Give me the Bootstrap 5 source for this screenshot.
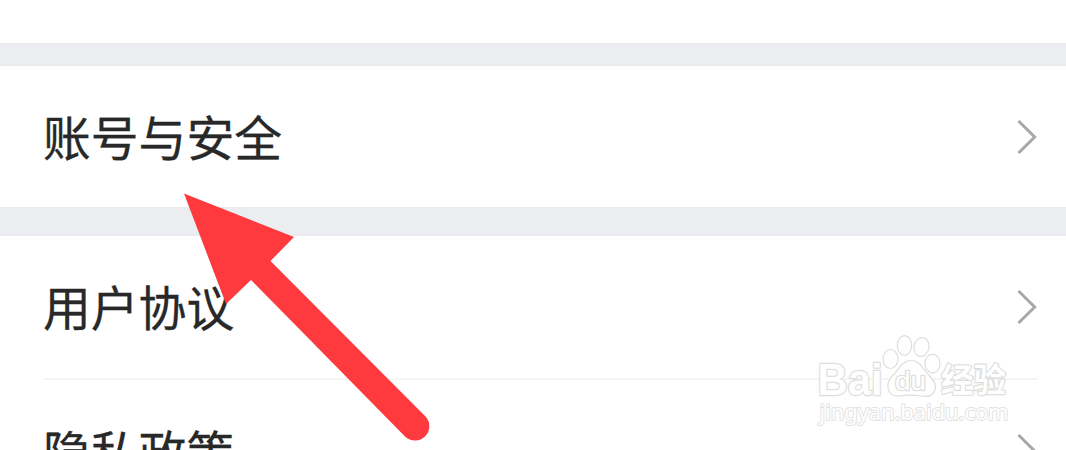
<!DOCTYPE html>
<html lang="zh-CN">
<head>
    <meta charset="UTF-8">
    <meta name="viewport" content="width=device-width, initial-scale=1">
    <title>设置</title>
    <link rel="stylesheet" href="https://cdn.jsdelivr.net/npm/bootstrap@5.3.3/dist/css/bootstrap.min.css">
    <style>
        body {
            font-family: "Noto Sans CJK SC", sans-serif;
            color: #282828;
            height: 450px;
            overflow: hidden;
        }
        .top-space { height: 43px; }
        .band {
            background: #ecedf0;
            border-top: 1px solid #e9eaeb;
            border-bottom: 1px solid #e9eaeb;
        }
        .band-first { height: 23px; }
        .band-second { height: 29px; }
        .setting-row {
            height: 141px;
            padding: 0 29px 0 43px;
            font-size: 47.8px;
            line-height: 70px;
            color: inherit;
            -webkit-text-stroke: .3px #282828;
        }
        .setting-row span { padding-bottom: 2px; }
        .setting-row svg { width: 20px; height: 36px; }
        .row-agreement { height: 142px; }
        .last-row { height: 70px; padding-top: 36px; overflow: hidden; }
        .divider { height: 2px; margin: 0 28px 0 43px; background: #f5f5f5; }
        .pointer, .watermark { left: 0; top: 0; pointer-events: none; }
    </style>
</head>
<body class="bg-white position-relative">
    <div class="top-space"></div>
    <div class="band band-first"></div>
    <a href="#" class="setting-row d-flex align-items-center justify-content-between text-decoration-none">
        <span>账号与安全</span>
        <svg viewBox="0 0 20 36" fill="none" stroke="#a8a8a8" stroke-width="3"><path d="M1.500 2 17.700 18 1.500 34"/></svg>
    </a>
    <div class="band band-second"></div>
    <a href="#" class="setting-row row-agreement d-flex align-items-center justify-content-between text-decoration-none">
        <span>用户协议</span>
        <svg viewBox="0 0 20 36" fill="none" stroke="#a8a8a8" stroke-width="3"><path d="M1.500 2 17.700 18 1.500 34"/></svg>
    </a>
    <div class="divider"></div>
    <a href="#" class="setting-row last-row d-flex align-items-start justify-content-between text-decoration-none">
        <span>隐私政策</span>
        <svg class="mt-3" viewBox="0 0 20 36" fill="none" stroke="#a8a8a8" stroke-width="3"><path d="M1.500 3 17.700 19 1.500 35"/></svg>
    </a>

    <!-- flecha -->
    <svg class="pointer position-absolute" width="1066" height="450" viewBox="0 0 1066 450">
        <path fill="#ff3a3e" d="M184 193.500 294 237 270.500 261 425 416A14.300 14.300 0 0 1 405 436.500L251 280 226 304Z"/>
    </svg>

    <!-- marca de agua -->
    <svg class="watermark position-absolute" width="1066" height="450" viewBox="0 0 1066 450">
        <g fill="#fff" stroke="#dedede" stroke-width="1.200" stroke-linejoin="round">
            <text x="817.500" y="395" font-family="Liberation Sans" font-size="43.500" font-weight="700" stroke-width="2.400" paint-order="stroke" textLength="65" lengthAdjust="spacingAndGlyphs">Bai</text>
            <ellipse cx="890.500" cy="359" rx="7.500" ry="9.500"/>
            <ellipse cx="904.500" cy="345.500" rx="7.200" ry="9.800"/>
            <ellipse cx="921.500" cy="347" rx="7.500" ry="9.500" transform="rotate(12 921.500 347)"/>
            <ellipse cx="932.500" cy="363.500" rx="7.500" ry="9.300"/>
            <path d="M911 360.500C903 360.500 900 367 895 373C890 378 887 382 888 388C889 394 894 396.500 900 396C906 395 914 395 920 396C928 397.500 934 395 935.500 388C936.500 382 931 378 927 373C922 367 919 360.500 911 360.500Z"/>
            <text x="895" y="390" font-family="Liberation Sans" font-size="25.500" stroke-width="2.400" paint-order="stroke" textLength="31" lengthAdjust="spacingAndGlyphs">du</text>
            <text x="941" y="392" font-family="Noto Sans CJK SC" font-size="33" font-weight="700" stroke-width="2.400" paint-order="stroke" textLength="65" lengthAdjust="spacingAndGlyphs">经验</text>
            <text x="819.500" y="420" font-family="Noto Sans" font-size="22.500" stroke="#e2e2e2" stroke-width="2" paint-order="stroke" textLength="189" lengthAdjust="spacingAndGlyphs">jingyan.baidu.com</text>
        </g>
    </svg>

    <script src="https://cdn.jsdelivr.net/npm/bootstrap@5.3.3/dist/js/bootstrap.bundle.min.js"></script>
</body>
</html>
